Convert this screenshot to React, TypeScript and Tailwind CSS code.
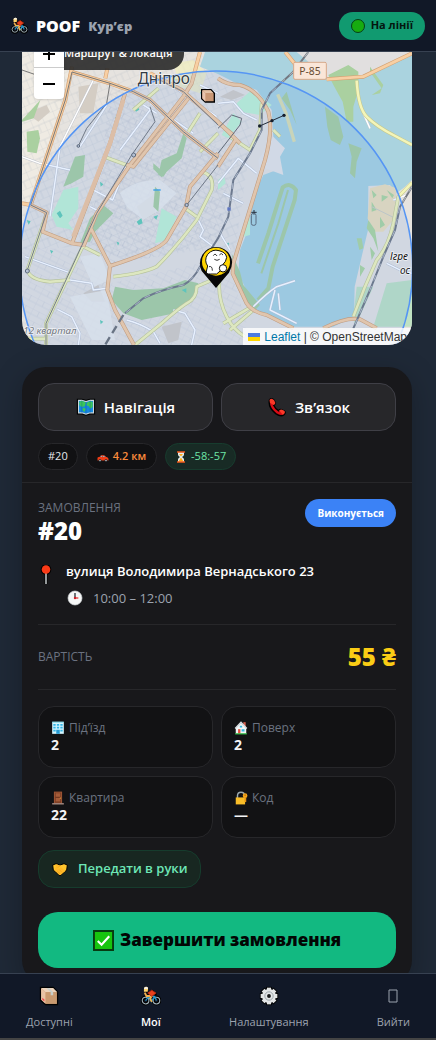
import type { ReactNode } from "react";

type IconProps = { className?: string };

function CyclistIcon({ className = "size-4" }: IconProps) {
  return (
    <svg viewBox="0 0 24 24" className={className} fill="none" aria-hidden="true">
      <g stroke="#000" strokeWidth="4" strokeLinecap="round">
        <circle cx="5.5" cy="17.5" r="4" />
        <circle cx="18.5" cy="17.5" r="4" />
        <path d="M6 5v1M9 9l5-2 3 3" />
      </g>
      <circle cx="5.5" cy="17.5" r="4" stroke="#a3b4bd" strokeWidth="1.3" />
      <circle cx="18.5" cy="17.5" r="4" stroke="#a3b4bd" strokeWidth="1.3" />
      <path d="M5.5 17.5l4-5h7l2 5M9.5 12.5l3 6 4-6" stroke="#2495c9" strokeWidth="1.6" />
      <path d="M4.5 8l2 4 5 0M13 12l-2 3 2 4" stroke="#f2b04e" strokeWidth="2.2" />
      <path d="M8 8.500l5-3.500 5 3.500-5 4z" fill="#e8421d" stroke="#b72a11" />
      <path d="M3.500 7V3.500Q3.500 1 6 1t2.500 2.500L8 7z" fill="#ffd36b" />
      <path d="M3.500 3.500Q4 .8 6.500 1 9 1.500 8.500 3.500z" fill="#f6eee2" />
    </svg>
  );
}

function WorldMapIcon({ className = "size-5" }: IconProps) {
  return (
    <svg viewBox="0 0 24 24" className={className} aria-hidden="true">
      <path d="M3 4h4l5 1.500L17 4h4v15h-4l-5 1.500L7 19H3z" fill="#1475d1" stroke="#000" strokeWidth="4" />
      <path d="M3 4h4l5 1.500L17 4h4v15h-4l-5 1.500L7 19H3z" fill="#1687de" stroke="#c7d7df" strokeWidth="1.300" />
      <path d="M4 6l3-1.500 5 2-1.500 4.500L7 12l-3-2zM13 7l4-2 3 1v6l-3 2-1.500-3-3-1zM8 13l4 1-2 4-2-2z" fill="#3cc65a" />
      <path d="M7 4v15M12 6v14M17 4v15" stroke="#0c4c98" strokeWidth=".4" />
    </svg>
  );
}

function PhoneIcon({ className = "size-5" }: IconProps) {
  return (
    <svg viewBox="0 0 24 24" className={className} aria-hidden="true">
      <path d="M3 3.500Q5.500.5 8.500 4l1.500 3q.5 1.500-2 3 2 4.500 6 6.500 1.700-2 3.300-1.200l3.700 1.700q2 1.700-1 4.500-3.500 2.500-9.500-1.500Q1 12 3 3.500z" fill="#d90b15" stroke="#000" strokeWidth="1.700" />
      <path d="M3 3.500Q5.500.5 8.500 4l1.500 3q.3 1.500-2 2.500L3.500 7zM14.500 16l2.500-1q3 .8 4.500 2.500.5 2-2.500 4z" fill="#fa3a28" />
    </svg>
  );
}

function CarIcon({ className = "size-3" }: IconProps) {
  return (
    <svg viewBox="0 0 24 24" className={className} aria-hidden="true">
      <path d="M8 9h6l5 4H5z" fill="#95aebb" stroke="#d33817" strokeWidth="1.500" />
      <path d="M1 14q0-2 3-2h15q4 1 4 4v3H1z" fill="#f03e17" />
      <path d="M11 9v4" stroke="#d33817" strokeWidth="1.500" />
      <circle cx="6" cy="19" r="2.200" fill="#cad4da" stroke="#15191c" strokeWidth="1.500" />
      <circle cx="18" cy="19" r="2.200" fill="#cad4da" stroke="#15191c" strokeWidth="1.500" />
    </svg>
  );
}

function HourglassIcon({ className = "size-3" }: IconProps) {
  return (
    <svg viewBox="0 0 24 24" className={className} aria-hidden="true">
      <path d="M6 2h12v5q0 3-4 5 4 2 4 5v5H6v-5q0-3 4-5-4-2-4-5z" fill="#e7eff2" />
      <path d="M8 6h8l-4 5zM12 13l5 8H7z" fill="#ffae16" />
      <path d="M4 2h16M4 22h16" stroke="#ef5a1c" strokeWidth="3" />
    </svg>
  );
}

function PinIcon({ className = "h-5 w-4" }: IconProps) {
  return (
    <svg viewBox="0 0 16 20" className={className} aria-hidden="true">
      <path d="M8 7v12" stroke="#000" strokeWidth="3" />
      <circle cx="8" cy="4.500" r="5.300" fill="#000" />
      <path d="M8 7v12" stroke="#d4dadd" strokeWidth="1.400" />
      <circle cx="8" cy="4.500" r="4.300" fill="#fa3a17" />
    </svg>
  );
}

function ClockIcon({ className = "size-4" }: IconProps) {
  return (
    <svg viewBox="0 0 24 24" className={className} fill="none" aria-hidden="true">
      <circle cx="12" cy="12" r="10.500" fill="#f6f7f7" stroke="#d4dadd" />
      <path d="M12 12V4.500" stroke="#29343b" strokeWidth="2" />
      <path d="M12 12h5" stroke="#e53a37" strokeWidth="2" />
      <circle cx="12" cy="12" r="1.800" fill="#c71f27" />
    </svg>
  );
}

function BuildingIcon({ className = "size-3.5" }: IconProps) {
  return (
    <svg viewBox="0 0 24 24" className={className} aria-hidden="true">
      <path d="M2 2h20v20H2z" fill="#d4f6ff" />
      <path d="M4 5h4v3H4zm6 0h4v3h-4zm6 0h4v3h-4zM4 10h4v3H4zm6 0h4v3h-4zm6 0h4v3h-4zM4 15h4v3H4zm12 0h4v3h-4z" fill="#35b5e6" />
      <path d="M9 15h6v7H9z" fill="#249bd4" />
      <path d="M2 2h20" stroke="#8fe3f2" strokeWidth="2" />
    </svg>
  );
}

function HouseIcon({ className = "size-3.5" }: IconProps) {
  return (
    <svg viewBox="0 0 24 24" className={className} aria-hidden="true">
      <path d="M16 2h4v9h-4z" fill="#d9604f" />
      <path d="M3 12L12 3l9 9v10H3z" fill="#f3f6f6" />
      <path d="M2 13L12 2l10 11" stroke="#d6dde2" strokeWidth="2.400" fill="none" />
      <path d="M7 14h4v8H7z" fill="#e44c3d" />
      <path d="M13 14h5v4h-5zM10 8h4v3h-4z" fill="#38b7df" />
      <path d="M2 21h20v2H2z" fill="#36c84c" />
    </svg>
  );
}

function DoorIcon({ className = "size-3.5" }: IconProps) {
  return (
    <svg viewBox="0 0 24 24" className={className} aria-hidden="true">
      <path d="M5 1h14v20H5z" fill="#9b5333" />
      <path d="M7 3h10v17H7z" fill="#743821" />
      <path d="M8 4h8v6H8zm0 8h8v6H8z" fill="#a65c39" />
      <path d="M2 22h20" stroke="#c3a398" strokeWidth="2" />
      <circle cx="16" cy="12" r="1" fill="#ffca3a" />
    </svg>
  );
}

function LockIcon({ className = "size-3.5" }: IconProps) {
  return (
    <svg viewBox="0 0 24 24" className={className} fill="none" aria-hidden="true">
      <path d="M6 12V8q0-6 6-6t6 6v4" stroke="#9caab0" strokeWidth="2.500" />
      <path d="M3 11h16v12H3z" fill="#f9bd28" />
      <circle cx="19" cy="8" r="4" fill="#f9a618" />
      <path d="M18 11h3v8h-3z" fill="#e89413" />
      <circle cx="19" cy="7" r="1" fill="#7f5211" />
    </svg>
  );
}

function HandshakeIcon({ className = "size-4" }: IconProps) {
  return (
    <svg viewBox="0 0 24 24" className={className} aria-hidden="true">
      <path d="M1 6l5-2 6 2 6-2 5 2-1 8-3 2-5 5q-2 2-4 0l-5-5-3-2z" fill="#ffc52d" stroke="#000" strokeWidth="1.500" />
      <path d="M7 5l5 2-4 4q3 1 5-2l7 6-6 5q-2 2-4 0l-6-6z" fill="#ffb827" />
      <path d="M9 10l4-4M8 15l4 4M11 13l4 4" stroke="#e69a1c" strokeWidth="1" />
    </svg>
  );
}

function CheckBoxIcon({ className = "size-5" }: IconProps) {
  return (
    <svg viewBox="0 0 22 22" className={className} fill="none" aria-hidden="true">
      <path d="M1 1h20v20H1z" fill="#17c40f" stroke="#073b12" strokeWidth="2" />
      <path d="M5 11.500l4 4 8-9" stroke="#fff" strokeWidth="2.200" />
    </svg>
  );
}

function BoxIcon({ className = "size-5" }: IconProps) {
  return (
    <svg viewBox="0 0 24 24" className={className} aria-hidden="true">
      <path d="M2 2h15l5 5v15H8l-6-5z" fill="#c99060" stroke="#000" strokeWidth="2" />
      <path d="M2.500 2.500H17l5 5H8z" fill="#ecd3bb" />
      <path d="M2.500 2.500L8 7.500v14l-5.500-5z" fill="#e8c3a5" />
      <path d="M8 7.500h13.500v14H8z" fill="#c99a70" />
      <path d="M9 2.500l5 5v3.500h3V7.500l-5-5z" fill="#c9cfca" />
      <path d="M4 14l2.500 2.200v2.500L4 16.500z" fill="#ec4c4d" />
    </svg>
  );
}

function GearIcon({ className = "size-5" }: IconProps) {
  const teeth = [0, 45, 90, 135];
  return (
    <svg viewBox="0 0 24 24" className={className} fill="none" aria-hidden="true">
      <g stroke="#000" strokeWidth="7">
        {teeth.map((angle) => <path key={angle} d="M12 1v22" transform={`rotate(${angle} 12 12)`} />)}
      </g>
      <g stroke="#e1e3e4" strokeWidth="5">
        {teeth.map((angle) => <path key={angle} d="M12 2v20" transform={`rotate(${angle} 12 12)`} />)}
      </g>
      <circle cx="12" cy="12" r="8.300" fill="#e4e6e7" />
      <circle cx="12" cy="12" r="5" stroke="#8e999f" strokeWidth="1" />
      <circle cx="12" cy="12" r="2.300" fill="#17191a" />
    </svg>
  );
}

const orangeRoads = [
  "M216 50L196 150 130 350 92 465 140 488 128 545 216 580 252 585",
  "M66 460l26 5",
  "M216 66L330 100 400 125 450 150 550 245 654 325",
  "M375 130L330 280 216 580",
  "M654 310L570 410 558 470 500 570Q480 600 330 648L270 530",
  "M550 140L390 345 290 490 250 590",
  "M565 145L400 350 380 345",
  "M330 648L322 720 345 780 402 885",
  "M450 70L545 120 654 215 720 280",
  "M600 6L575 100 550 140",
  "M654 85Q680 105 720 105 775 120 805 185 820 240 795 330L700 640 698 670 740 760Q755 785 800 795L880 835",
  "M856 6L895 55M980 88L1090 80 1236 10",
  "M970 835Q1040 800 1080 808L1130 835",
  "M654 218L700 255M654 350L710 265M316 85L322 55",
];

const yellowRoads = [
  "M140 490L82 660Q90 690 150 695L210 690",
  "M250 585L138 820 138 885",
  "M312 320L380 345M400 180L475 115",
  "M250 590L300 615M340 680Q430 670 470 650 530 590 590 510L635 420Q645 375 605 365",
  "M405 885L485 820Q530 780 560 760 590 745 590 710L660 680Q650 740 680 800 700 840 735 860",
  "M555 475L590 500M565 245L600 190M600 305L654 250",
  "M785 160L780 240 750 300 690 260M670 820L755 770M690 840L760 780",
  "M1070 92Q1075 175 1100 200 1130 230 1180 255L1236 285",
  "M1236 398L1195 440 1180 520Q1165 590 1130 630L1095 710 1060 800",
  "M66 866H138M520 85L550 85M820 240L840 260",
];

const minorRoads = [
  "M150 500L180 290 235 180 280 90M320 165L240 290M66 320L120 340 210 360",
  "M270 470L290 480M430 165L470 190M360 300L450 180M380 345L338 450 280 420",
  "M215 670L75 620M210 690L275 700 280 720 320 715",
  "M172 778L215 800 240 850 235 885M380 810Q420 820 460 845L480 880M520 780L555 790 585 840 575 885",
  "M590 500L610 540 600 560 640 590M450 160L580 250M520 110L650 200M600 105L654 130",
  "M654 160L700 155 730 190 770 210M654 400L715 325 770 370M670 430L730 460M660 550L690 600",
  "M760 770Q800 730 830 710L885 692M825 720L810 780 890 820M835 730L840 780",
  "M1160 640L1210 665 1236 670M1180 450L1220 435 1236 410M1090 190L1110 235",
];

const railRoads = [
  "M330 100L320 160 260 235 235 288M66 60L118 78M450 170L465 215 395 315 290 490 138 820V885",
  "M216 66L196 150 130 350 92 465 140 488 82 660M654 345L560 465",
  "M216 66L330 100 400 125 450 150 550 245 654 325M450 75L550 125 654 225",
];

const parks = [
  "M80 245l35-5 5 25-10 45-28-5z", "M66 210l55-60-20 55-35 10z",
  "M225 320l30-5-5 65-35 20-25 10z", "M485 330l45-20 20-60 10 15-15 60-45 40-10 15-15-5z",
  "M460 340l35 30-10 12-25-25z", "M465 410l15 15-5 60-15-15z",
  "M270 505l40-40 30 25-20 20-35 35-15 30-30 5z",
  "M345 710l55 10 90-5 65-25 40 10-15 50-55 40-100 20-55-20-35-40z",
  "M975 170l40 30 15 60-10 25-28-15-10-40z", "M1045 280l40 15-15 40-5 50-15-15 5-50z",
  "M985 75l60-30 30 20 0 55-15 50 0 45-20 0-12-60-25-45z", "M1110 50l40 55-10 25-25 5 30-20-35-50z",
  "M695 610l25 55 10 40 50 60-20 20-50-75z", "M820 110l25 35 15-20 30 100-20-45z",
];

const paleParks = [
  "M190 420l45-10 0 65-30 45 15 20-50-10-15-35z", "M485 475l45 25-30 70-35 10z",
  "M710 160l45-40 60 45-35 30-60-10z", "M700 190l25 25-40 50-20-10z",
  "M654 390l18-15 5 25-23 20z", "M735 510l15-5 0 50-20 5z",
];

const blocks = [
  "M80 190l60-25 10 20-35 30z", "M235 110l60-10-15 90-40 0z", "M410 470l55-40 0 60-35 20z",
  "M485 830l60-15-10 55-30 10z", "M250 730l45-25 20 50-40 0z", "M660 140l40-20 35 15-40 15z",
];

function CityMap() {
  return (
    <svg viewBox="66 6 1170 879" preserveAspectRatio="xMidYMid slice" className="block size-full" role="img" aria-label="Карта Дніпра">
      <defs>
        <pattern id="streets-a" width="44" height="34" patternUnits="userSpaceOnUse" patternTransform="rotate(27)">
          <path d="M0 0H44M0 0V34M22 0V17M0 17H44" stroke="#c3c5cb" strokeWidth="1.500" fill="none" />
        </pattern>
        <pattern id="streets-b" width="36" height="46" patternUnits="userSpaceOnUse" patternTransform="rotate(-23)">
          <path d="M0 0H36M0 0V46M0 23H36M18 23V46" stroke="#c5c7cd" strokeWidth="1.500" fill="none" />
        </pattern>
      </defs>
      <rect x="66" y="6" width="1170" height="879" fill="#e6e3df" />
      <path d="M66 6H330L216 50 92 465 66 460z" fill="#efebe3" />
      <path d="M66 6H600L654 100 770 150 700 640 600 600 400 630 230 590 66 600z" fill="url(#streets-b)" />
      <path d="M330 100L550 250 700 300 660 570 480 620 330 640 250 580 300 400z" fill="url(#streets-a)" />
      <path d="M66 590L230 600 330 700 600 640 700 690 760 885H66z" fill="url(#streets-a)" opacity=".65" />
      {blocks.map((d) => <path key={d} d={d} fill="#d4cdc4" />)}
      <path d="M360 430Q400 390 480 390L530 430 480 480 430 510 380 470zM240 620l60-10 30 80-50 20zM210 740l110-20 25 150-70 0z" fill="#ededeb" opacity=".8" />
      <path d="M520 40l60-10 40 40-20 60-60-20z" fill="#f5f2b8" opacity=".6" />
      <path d="M615 6H1236V390L1215 410 1190 430 1170 405 1105 408 1104 540 1085 620 1064 710 1062 800 1000 830H880L770 785 715 670 720 600 740 550 765 430 790 375 830 360 840 310 820 260 815 180 770 120 700 95 654 72 600 50z" fill="#aad3df" />
      <path d="M890 6H1236L1090 80 985 86 950 70 925 35z" fill="#e1dfdf" />
      <path d="M820 260l35 35-15 25 10 55-55-20-15 15-5-40z" fill="#e6e5e4" />
      {parks.map((d) => <path key={d} d={d} fill="#aad0a0" />)}
      <path d="M774 640L805 550 848 412Q870 395 888 420L884 450 818 650 805 715 774 750" fill="none" stroke="#aad0a0" strokeWidth="12" />
      <path d="M864 420L835 520 784 670" fill="none" stroke="#aad0a0" strokeWidth="6" />
      <path d="M1070 710l50 0-55 120-5-30zM1160 700L1236 690V830H1120z" fill="#c0e2c2" />
      {paleParks.map((d) => <path key={d} d={d} fill="#c2f3d3" />)}
      <path d="M1110 415l45-12 35 12-10 95-30 35-25 0-22-40z" fill="#eee0ba" />
      <path d="M1115 420l15 15-10 10zM1145 435l20 5-20 15zM1115 455l15 25-15 5zM1140 500l15 25-15 10zM1160 420l22 15-5 10zM1105 510l20 30 10 65-15-40-20-30zM1070 565l15 0 5 30-12 5zM1110 590l15 20-10 20zM1080 645l15 10-15 25z" fill="#afd69e" />
      <path d="M1115 470l65 32" stroke="#cfd0c3" strokeWidth="3" fill="none" />
      <path d="M833 133L858 190 883 275" stroke="#dde0b1" strokeWidth="10" fill="none" />
      <g fill="#64cdb4">
        <path d="M170 490l10-8 8 15-8 8zM410 515l14-10 4 15-12 5zM270 520l8-5 5 12-8 4zM345 200l12 5-5 8zM400 175l12-8 6 12-10 6zM460 500l14-5-5 14zM545 720l14-5 0 14zM80 510l12 4-6 10zM300 395l10 8-8 7zM600 125l15 10-10 7zM675 580l12-2-2 12zM350 575l8 3-4 9zM150 600l10 3-6 8zM300 810l10 5-8 8z" />
      </g>
      <path d="M460 420h22" stroke="#42a7e2" strokeWidth="4" />
      <g fill="none" strokeLinejoin="round">
        {minorRoads.map((d) => <path key={d} d={d} stroke="#bfc3cc" strokeWidth="7" />)}
        {minorRoads.map((d) => <path key={`${d}-fill`} d={d} stroke="#fff" strokeWidth="4.500" />)}
        {yellowRoads.map((d) => <path key={d} d={d} stroke="#c5c98e" strokeWidth="11" />)}
        {yellowRoads.map((d) => <path key={`${d}-fill`} d={d} stroke="#f4f5b9" strokeWidth="7.500" />)}
        {orangeRoads.map((d) => <path key={d} d={d} stroke="#d3a173" strokeWidth="12" />)}
        {orangeRoads.map((d) => <path key={`${d}-fill`} d={d} stroke="#f8cfa3" strokeWidth="8.500" />)}
        <path d="M370 150L330 280 220 560" stroke="#f3c79c" strokeWidth="13" />
        {railRoads.map((d) => <path key={d} d={d} stroke="#777" strokeWidth="3" />)}
        <path d="M925 6L880 65 810 130 785 180 785 240 750 310 700 390 685 500 654 565 600 650Q580 690 550 705 480 720 430 745L375 790M1236 410L1200 470 1185 540 1150 620 1110 720 1060 835" stroke="#747880" strokeWidth="6" />
        <path d="M925 6L880 65 810 130 785 180 785 240 750 310 700 390 685 500 654 565M600 650Q580 690 550 705 480 720 430 745L375 790M1236 410L1200 470 1185 540 1150 620 1110 720 1060 835" stroke="#c8cbd0" strokeWidth="2.500" strokeDasharray="18 18" />
        <path d="M370 795L315 885" stroke="#707275" strokeWidth="7" strokeDasharray="25 14" />
        <path d="M654 235L695 195 725 205 720 225 654 310" stroke="#666" strokeWidth="3" />
        <path d="M779 228L816 212 852 196M754 487h16M762 480v14" stroke="#222" strokeWidth="3" />
        <rect x="754" y="490" width="14" height="36" rx="6" stroke="#606970" strokeWidth="3" />
      </g>
      <g fill="#111">
        <circle cx="779" cy="228" r="5" /><circle cx="816" cy="212" r="5" /><circle cx="852" cy="196" r="5" />
      </g>
      <g fill="#c8cbd1" stroke="#62676d" strokeWidth="3">
        <circle cx="401" cy="315" r="6" /><circle cx="235" cy="288" r="4" /><circle cx="560" cy="465" r="5" /><circle cx="82" cy="663" r="6" />
      </g>
      <rect x="682" y="472" width="10" height="10" fill="#6575ba" />
      <circle cx="648" cy="653" r="590" fill="#3b82f6" fillOpacity=".12" stroke="#5595f4" strokeWidth="4.500" />
      <g fontFamily="Noto Sans, sans-serif" stroke="#fff" strokeOpacity=".65" strokeWidth="5" paintOrder="stroke" fill="#333b45">
        <text x="413" y="101" fontSize="46">Дніпро</text>
        <text x="70" y="851" fontSize="29" fontStyle="italic" fill="#727781">12 квартал</text>
        <text x="1170" y="629" fontSize="30" fontStyle="italic" fill="#111">Ігре</text>
        <text x="1200" y="671" fontSize="30" fontStyle="italic" fill="#111">ос</text>
      </g>
      <rect x="881" y="37" width="98" height="51" rx="4" fill="#fae6d8" stroke="#d6a98b" strokeWidth="3" />
      <text x="930" y="74" textAnchor="middle" fontFamily="Noto Sans, sans-serif" fontSize="31" fill="#674c34">P-85</text>
      <g transform="translate(603 116)" stroke="#000" strokeWidth="4">
        <path d="M2 3H30L40 14V40H13L2 30z" fill="#c99775" />
        <path d="M2 3L13 14V39L4 29V6" stroke="none" fill="#e8c4ae" />
        <path d="M5 5H29L37 13H13z" stroke="none" fill="#e3c2a6" />
      </g>
      <path d="M648 714L605 663Q593 638 607 614 621 592 648 591 677 592 690 615 704 639 687 668z" fill="#070707" />
      <circle cx="648" cy="635" r="42" fill="#ffd400" />
      <path d="M623 648Q611 631 623 613 638 596 657 602 677 606 680 622 678 636 669 643L665 659 650 672 632 672Q615 674 620 660z" fill="#fff" stroke="#111" strokeWidth="3" />
      <path d="M640 617q5-9 11 1M658 615q6-9 11 0M643 628q8 6 16 0M627 650q10-3 10 12" fill="none" stroke="#111" strokeWidth="2.500" />
      <circle cx="669" cy="655" r="11" fill="#fff" stroke="#111" strokeWidth="3" />
    </svg>
  );
}

function RouteMap() {
  return (
    <section className="relative h-[293px] overflow-hidden rounded-b-3xl" aria-label="Маршрут">
      <CityMap />
      <div className="absolute -top-4 left-3 flex h-[34px] items-center rounded-2xl bg-[#292929]/90 pr-3 pl-[30px] text-[11px] leading-4 font-semibold whitespace-nowrap text-white">
        Маршрут &amp; локація
      </div>
      <div className="absolute -top-4 left-3 flex w-[30px] flex-col overflow-hidden rounded-sm bg-white shadow">
        <button type="button" aria-label="Збільшити" className="flex h-8 items-center justify-center border-b border-[#ccc] pt-1">
          <svg viewBox="0 0 14 14" className="size-3.5" aria-hidden="true"><path d="M7 1v12M1 7h12" stroke="#000" strokeWidth="2" /></svg>
        </button>
        <button type="button" aria-label="Зменшити" className="flex h-[31px] items-center justify-center">
          <svg viewBox="0 0 14 14" className="size-3.5" aria-hidden="true"><path d="M1 7h12" stroke="#000" strokeWidth="2" /></svg>
        </button>
      </div>
      <div className="absolute right-0 bottom-0 flex h-[17px] items-center gap-1 bg-white/80 px-[5px] font-['Liberation_Sans',sans-serif] text-xs whitespace-nowrap text-[#333]">
        <svg viewBox="0 0 12 8" className="h-2 w-3" aria-hidden="true">
          <path d="M0 0h12v4H0z" fill="#4c7be1" /><path d="M0 4h12v4H0z" fill="#ffd500" />
        </svg>
        <span><a href="#leaflet" className="text-[#0078a8]">Leaflet</a> | © OpenStreetMap</span>
      </div>
    </section>
  );
}

function ActionButton({ icon, children }: { icon: ReactNode; children: ReactNode }) {
  return (
    <button type="button" className="flex h-12 items-center justify-center gap-2 rounded-2xl border border-[#3f3f46] bg-[#27272a] text-[15px] font-semibold text-white">
      {icon}{children}
    </button>
  );
}

function Detail({ icon, label, value }: { icon: ReactNode; label: string; value: string }) {
  return (
    <div className="h-[62px] rounded-2xl border border-[#27272a] bg-[#121214] px-3 py-3">
      <dt className="flex h-[18px] items-center gap-1 text-xs text-[#6b7280]">{icon}{label}</dt>
      <dd className="text-sm leading-4 font-bold text-[#f3f4f6]">{value}</dd>
    </div>
  );
}

function OrderCard() {
  return (
    <article className="mt-[22px] rounded-3xl bg-[#18181b] pb-4 shadow-[0_8px_30px_rgba(0,0,0,0.25)]">
      <div className="border-b border-[#27272a] px-4 pt-4 pb-3">
        <div className="grid grid-cols-2 gap-2">
          <ActionButton icon={<WorldMapIcon />}>Навігація</ActionButton>
          <ActionButton icon={<PhoneIcon />}>Зв’язок</ActionButton>
        </div>
        <div className="mt-3 flex h-[27px] gap-2 text-[11px]">
          <span className="flex items-center rounded-full border border-[#27272a] bg-[#111113] px-[9px] text-[#e5e7eb]">#20</span>
          <span className="flex items-center gap-1 rounded-full border border-[#27272a] bg-[#111113] px-2.5 font-semibold text-[#fb8b3c]"><CarIcon />4.2 км</span>
          <span className="flex items-center gap-1 rounded-full border border-[#173c2e] bg-[#182b25] px-[9px] text-[#6ee7a7]"><HourglassIcon />-58:-57</span>
        </div>
      </div>
      <div className="px-4 pt-4">
        <div className="flex items-start justify-between">
          <div>
            <p className="text-xs leading-[18px] text-[#6b7280]">ЗАМОВЛЕННЯ</p>
            <h1 className="text-2xl leading-7 font-extrabold text-white">#20</h1>
          </div>
          <span className="flex h-7 items-center rounded-full bg-[#3b82f6] px-3 text-[10px] font-bold text-white">Виконується</span>
        </div>
        <div className="mt-4 flex gap-3 border-b border-[#27272a] pb-4">
          <PinIcon className="mt-1 h-5 w-4 shrink-0" />
          <div className="min-w-0">
            <p className="text-[13px] leading-5 font-semibold text-white">вулиця Володимира Вернадського 23</p>
            <p className="mt-[7px] flex items-center gap-2.5 pl-px text-[13px] leading-5 text-[#9ca3af]"><ClockIcon />10:00 – 12:00</p>
          </div>
        </div>
        <div className="flex h-[65px] items-center justify-between border-b border-[#27272a]">
          <span className="text-xs text-[#6b7280]">ВАРТІСТЬ</span>
          <strong className="text-2xl font-extrabold text-[#facc15]">55 ₴</strong>
        </div>
        <dl className="mt-4 grid grid-cols-2 gap-2">
          <Detail icon={<BuildingIcon />} label="Під’їзд" value="2" />
          <Detail icon={<HouseIcon />} label="Поверх" value="2" />
          <Detail icon={<DoorIcon />} label="Квартира" value="22" />
          <Detail icon={<LockIcon />} label="Код" value="—" />
        </dl>
        <p className="mt-3 flex h-[38px] w-fit items-center gap-2.5 rounded-2xl border border-[#163c2d] bg-[#182721] pr-3 pl-[13px] text-[13px] font-semibold text-[#6ee7b7]"><HandshakeIcon />Передати в руки</p>
        <button type="button" className="mt-6 flex h-14 w-full items-center justify-center gap-1.5 rounded-[20px] bg-[#12b981] text-[17px] font-extrabold text-[#020604]"><CheckBoxIcon className="size-[21px]" />Завершити замовлення</button>
      </div>
    </article>
  );
}

function NavItem({ icon, label, active = false }: { icon: ReactNode; label: string; active?: boolean }) {
  return (
    <a href="#" aria-current={active ? "page" : undefined} className={active ? "flex flex-col items-center gap-2 text-[11px] leading-4 font-semibold text-white" : "flex flex-col items-center gap-2 text-[11px] leading-4 text-[#9ca3af]"}>
      <span className="flex h-5 items-center">{icon}</span>{label}
    </a>
  );
}

export default function App() {
  return (
    <div className="flex h-screen flex-col bg-[#1f2937] font-['Open_Sans','Noto_Sans',sans-serif]">
      <header className="flex h-[52px] shrink-0 items-center justify-between border-b border-[#374151] bg-[#111827] px-[11px]">
        <div className="flex items-center gap-2">
          <CyclistIcon className="size-[17px]" />
          <span className="text-base font-extrabold text-white">POOF</span>
          <span className="pt-0.5 text-[13px] font-extrabold text-[#9ca3af]">Кур’єр</span>
        </div>
        <button type="button" className="flex h-7 items-center gap-1.5 rounded-full bg-[#119a70] px-3 text-[11px] font-bold text-[#04160f]">
          <span className="size-3.5 rounded-full border border-[#063f17] bg-[#17ac10]" />На лінії
        </button>
      </header>
      <main className="min-h-0 flex-1 overflow-y-auto pr-6 pl-[22px] [scrollbar-width:none]">
        <RouteMap />
        <OrderCard />
      </main>
      <nav aria-label="Головна навігація" className="flex h-[67px] shrink-0 items-start justify-between border-t border-b-2 border-t-[#374151] border-b-[#444] bg-[#111827] px-[26px] pt-3">
        <NavItem icon={<BoxIcon />} label="Доступні" />
        <NavItem icon={<CyclistIcon className="size-5" />} label="Мої" active />
        <NavItem icon={<GearIcon />} label="Налаштування" />
        <NavItem icon={<svg viewBox="0 0 10 14" className="h-3.5 w-2.5" aria-hidden="true"><path d="M1 1h8v12H1z" fill="none" stroke="#9ca3af" /></svg>} label="Вийти" />
      </nav>
    </div>
  );
}
